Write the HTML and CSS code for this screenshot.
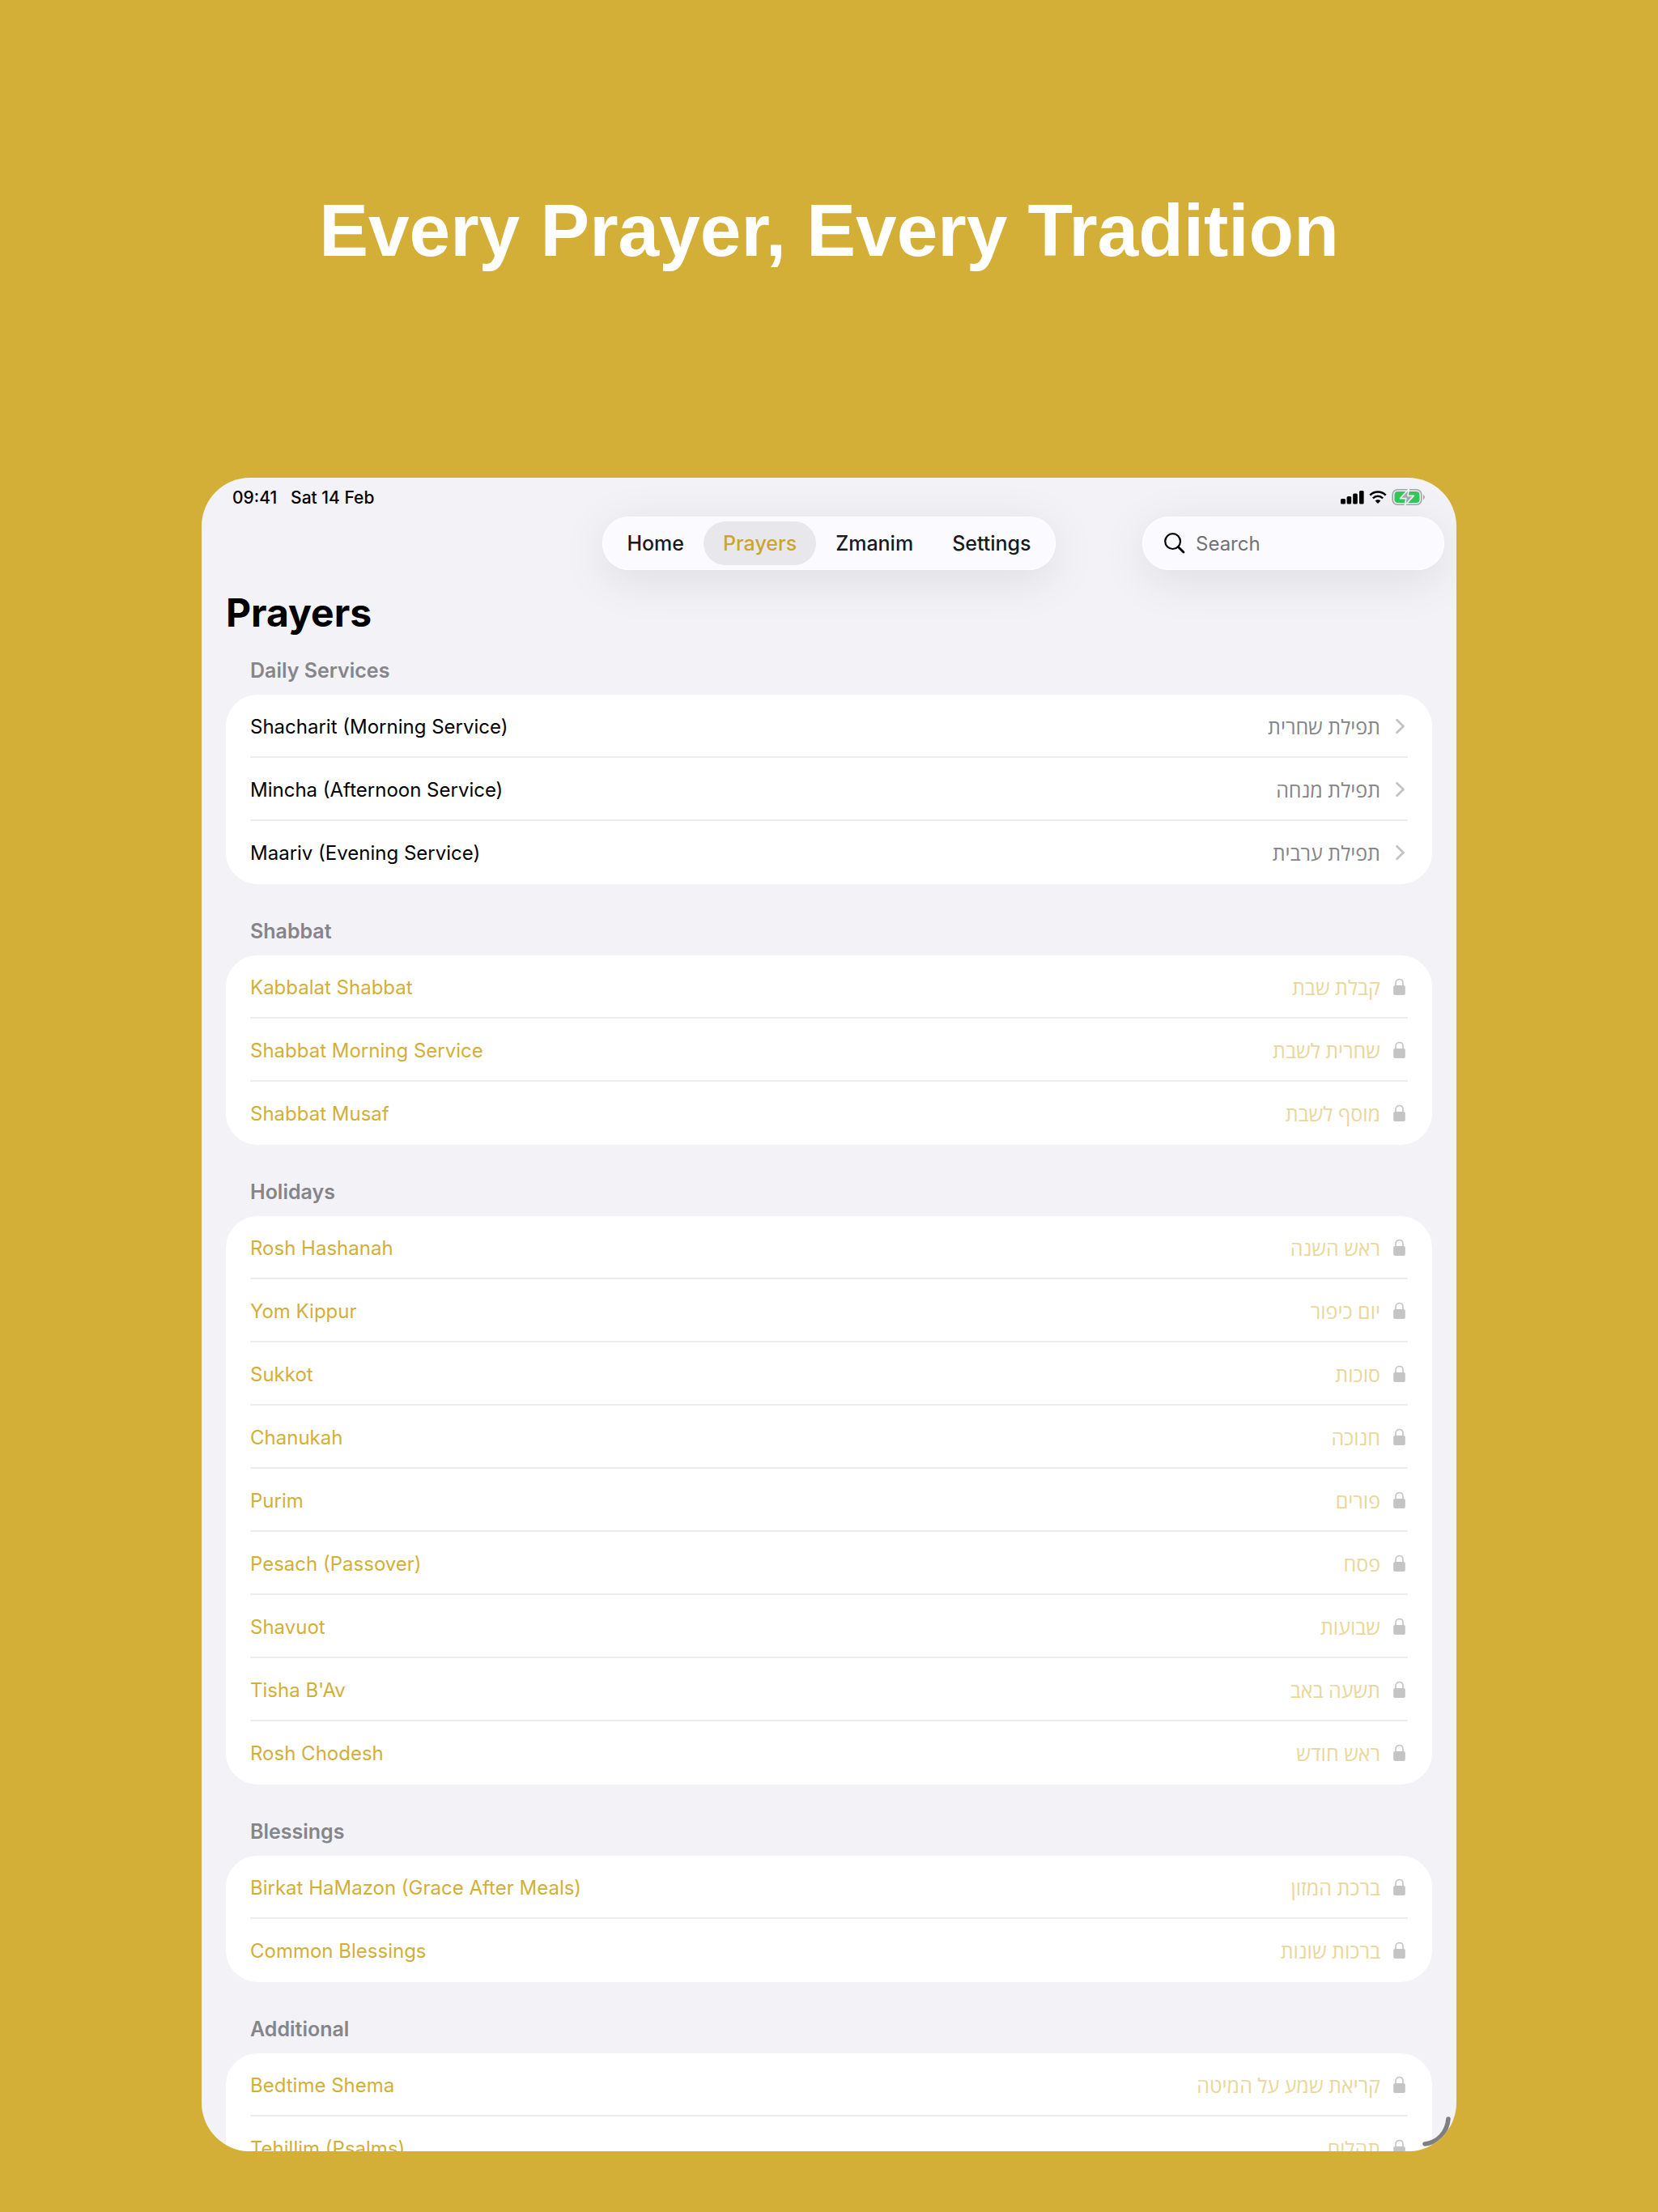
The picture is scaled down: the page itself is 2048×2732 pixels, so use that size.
FILE: index.html
```html
<!DOCTYPE html>
<html lang="en">
<head>
    <meta charset="UTF-8">
    <meta name="viewport" content="width=device-width, initial-scale=1.0">
    <title>Prayers</title>
    <link rel="stylesheet" href="styles.css">
</head>
<body>
    <!-- shared icons -->
    <svg class="sprite" aria-hidden="true">
        <symbol id="chevron" viewBox="0 0 20 22">
            <path d="M6.5 3.3 L14.5 11 L6.5 18.7" fill="none" stroke="#c4c4c6" stroke-width="2.8" stroke-linecap="round" stroke-linejoin="round"/>
        </symbol>
        <symbol id="lock" viewBox="0 0 20 22">
            <path d="M5 10 V6.2 C5 3.2 7 1.5 9.5 1.5 S14 3.2 14 6.2 V10" fill="none" stroke="#c4c4c6" stroke-width="1.6"/>
            <rect x="2.2" y="9" width="14.6" height="12" rx="2" fill="#c4c4c6"/>
        </symbol>
    </svg>

    <h1 class="headline">Every Prayer, Every Tradition</h1>

    <div class="tablet">
        <div class="status">
            <span>09:41</span>
            <span>Sat 14 Feb</span>
            <div class="status-icons">
                <svg width="29" height="18" viewBox="0 0 29 18">
                    <rect x="0" y="11" width="6" height="6.5" rx="1.5"/>
                    <rect x="7.6" y="8" width="5.6" height="9.5" rx="1.5"/>
                    <rect x="15.2" y="4.5" width="5.6" height="13" rx="1.5"/>
                    <rect x="23" y="1" width="5.6" height="16.5" rx="1.5"/>
                </svg>
                <svg width="22" height="18" viewBox="0 0 22 18">
                    <path d="M1.3 6.6 C6.8 1.2 15.2 1.2 20.7 6.6" fill="none" stroke="#000" stroke-width="2.6"/>
                    <path d="M4.9 10.4 C8.4 7 13.6 7 17.1 10.4" fill="none" stroke="#000" stroke-width="2.5"/>
                    <path d="M11 17 L7.6 13.6 C9.5 11.8 12.5 11.8 14.4 13.6 Z"/>
                </svg>
                <svg width="42" height="22" viewBox="0 0 42 22">
                    <rect x="1.2" y="1.8" width="35.6" height="18.4" rx="6" fill="none" stroke="#a5a5a9" stroke-width="1.6"/>
                    <rect x="3.5" y="4" width="31" height="14" rx="4" fill="#34c759"/>
                    <path d="M39 8 C41.4 9 41.4 13 39 14 Z" fill="#a5a5a9"/>
                    <path d="M21.3 1 L10.5 12.6 H17.8 L16.3 21 L27.3 9.4 H20 Z" fill="#a9a9ad" stroke="#f2f2f7" stroke-width="1.6" stroke-linejoin="round"/>
                </svg>
            </div>
        </div>

        <div class="toolbar">
            <nav class="tabs">
                <a href="#home" class="tab">Home</a>
                <a href="#prayers" class="tab active">Prayers</a>
                <a href="#zmanim" class="tab">Zmanim</a>
                <a href="#settings" class="tab">Settings</a>
            </nav>
            <label class="search">
                <svg width="26" height="26" viewBox="0 0 26 26" aria-hidden="true">
                    <circle cx="10.6" cy="10.6" r="9.4" fill="none" stroke="#000" stroke-width="2.2"/>
                    <path d="M17.4 17.4 L24 24" stroke="#000" stroke-width="2.8" stroke-linecap="round"/>
                </svg>
                <input type="search" placeholder="Search" aria-label="Search">
            </label>
        </div>

        <main class="content">
            <h2 class="page-title">Prayers</h2>

            <section class="group">
                <h3>Daily Services</h3>
                <ul class="card">
                    <li><a href="#" class="row"><span>Shacharit (Morning Service)</span><span class="he" lang="he" dir="rtl">תפילת שחרית</span><svg class="icon"><use href="#chevron"/></svg></a></li>
                    <li><a href="#" class="row"><span>Mincha (Afternoon Service)</span><span class="he" lang="he" dir="rtl">תפילת מנחה</span><svg class="icon"><use href="#chevron"/></svg></a></li>
                    <li><a href="#" class="row"><span>Maariv (Evening Service)</span><span class="he" lang="he" dir="rtl">תפילת ערבית</span><svg class="icon"><use href="#chevron"/></svg></a></li>
                </ul>
            </section>

            <section class="group">
                <h3>Shabbat</h3>
                <ul class="card locked">
                    <li><a href="#" class="row"><span>Kabbalat Shabbat</span><span class="he" lang="he" dir="rtl">קבלת שבת</span><svg class="icon"><use href="#lock"/></svg></a></li>
                    <li><a href="#" class="row"><span>Shabbat Morning Service</span><span class="he" lang="he" dir="rtl">שחרית לשבת</span><svg class="icon"><use href="#lock"/></svg></a></li>
                    <li><a href="#" class="row"><span>Shabbat Musaf</span><span class="he" lang="he" dir="rtl">מוסף לשבת</span><svg class="icon"><use href="#lock"/></svg></a></li>
                </ul>
            </section>

            <section class="group">
                <h3>Holidays</h3>
                <ul class="card locked">
                    <li><a href="#" class="row"><span>Rosh Hashanah</span><span class="he" lang="he" dir="rtl">ראש השנה</span><svg class="icon"><use href="#lock"/></svg></a></li>
                    <li><a href="#" class="row"><span>Yom Kippur</span><span class="he" lang="he" dir="rtl">יום כיפור</span><svg class="icon"><use href="#lock"/></svg></a></li>
                    <li><a href="#" class="row"><span>Sukkot</span><span class="he" lang="he" dir="rtl">סוכות</span><svg class="icon"><use href="#lock"/></svg></a></li>
                    <li><a href="#" class="row"><span>Chanukah</span><span class="he" lang="he" dir="rtl">חנוכה</span><svg class="icon"><use href="#lock"/></svg></a></li>
                    <li><a href="#" class="row"><span>Purim</span><span class="he" lang="he" dir="rtl">פורים</span><svg class="icon"><use href="#lock"/></svg></a></li>
                    <li><a href="#" class="row"><span>Pesach (Passover)</span><span class="he" lang="he" dir="rtl">פסח</span><svg class="icon"><use href="#lock"/></svg></a></li>
                    <li><a href="#" class="row"><span>Shavuot</span><span class="he" lang="he" dir="rtl">שבועות</span><svg class="icon"><use href="#lock"/></svg></a></li>
                    <li><a href="#" class="row"><span>Tisha B'Av</span><span class="he" lang="he" dir="rtl">תשעה באב</span><svg class="icon"><use href="#lock"/></svg></a></li>
                    <li><a href="#" class="row"><span>Rosh Chodesh</span><span class="he" lang="he" dir="rtl">ראש חודש</span><svg class="icon"><use href="#lock"/></svg></a></li>
                </ul>
            </section>

            <section class="group">
                <h3>Blessings</h3>
                <ul class="card locked">
                    <li><a href="#" class="row"><span>Birkat HaMazon (Grace After Meals)</span><span class="he" lang="he" dir="rtl">ברכת המזון</span><svg class="icon"><use href="#lock"/></svg></a></li>
                    <li><a href="#" class="row"><span>Common Blessings</span><span class="he" lang="he" dir="rtl">ברכות שונות</span><svg class="icon"><use href="#lock"/></svg></a></li>
                </ul>
            </section>

            <section class="group">
                <h3>Additional</h3>
                <ul class="card locked">
                    <li><a href="#" class="row"><span>Bedtime Shema</span><span class="he" lang="he" dir="rtl">קריאת שמע על המיטה</span><svg class="icon"><use href="#lock"/></svg></a></li>
                    <li><a href="#" class="row"><span>Tehillim (Psalms)</span><span class="he" lang="he" dir="rtl">תהלים</span><svg class="icon"><use href="#lock"/></svg></a></li>
                </ul>
            </section>
        </main>

        <svg class="resize" width="36" height="38" viewBox="0 0 36 38" aria-hidden="true">
            <path d="M33 3 C31.5 20 20 32 4 34" fill="none" stroke="#7f7f7f" stroke-width="5.6" stroke-linecap="round"/>
        </svg>
    </div>
</body>
</html>
```

FILE: styles.css
```css
*{
    box-sizing: border-box;
}
body{
    margin: 0;
    height: 100vh;
    display: flex;
    flex-direction: column;
    padding: 229px 249px 75px;
    background-color: #d3af37;
    font-family: Inter, "Open Sans", sans-serif;
    font-size: 24px;
    color: black;
    overflow: hidden;
}
h1,h2,h3,ul{
    margin: 0;
    padding: 0;
}
ul{
    list-style: none;
}
a{
    color: inherit;
    text-decoration: none;
}
.sprite{
    display: none;
}

.headline{
    margin-bottom: 249px;
    font-family: "Liberation Sans", Arial, sans-serif;
    font-size: 91px;
    line-height: 112px;
    text-align: center;
    white-space: nowrap;
    color: white;
}

.tablet{
    position: relative;
    flex: 1;
    min-height: 0;
    overflow: hidden;
    border-radius: 60px;
    background-color: #f2f2f7;
}

/* status bar */
.status{
    display: flex;
    align-items: center;
    gap: 17px;
    height: 48px;
    padding: 0 38px;
    font-size: 21px;
    font-weight: 500;
}
.status-icons{
    display: flex;
    align-items: center;
    gap: 6px;
    margin-left: auto;
}

/* tabs and search */
.toolbar{
    display: grid;
    grid-template-columns: 1fr auto 1fr;
    align-items: center;
    padding: 0 15px;
}
.tabs{
    grid-column: 2;
    display: flex;
    height: 66px;
    padding: 6px;
    border-radius: 33px;
    background-color: #fbfbff;
    box-shadow: inset 0 0 0 1px white, 0 12px 60px rgb(0, 0, 0, .09);
}
.tab{
    padding: 0 24px;
    border-radius: 27px;
    font-size: 25px;
    line-height: 54px;
    font-weight: 500;
    color: #1a1a1a;
}
.active{
    background-color: #e8e8ec;
    color: #cba52f;
}
.search{
    justify-self: end;
    display: flex;
    align-items: center;
    gap: 13px;
    width: 373px;
    height: 66px;
    padding: 0 27px;
    border-radius: 33px;
    background-color: #fbfbff;
    box-shadow: inset 0 0 0 1px white, 0 12px 60px rgb(0, 0, 0, .09);
}
.search svg{
    flex: none;
}
.search input{
    flex: 1;
    min-width: 0;
    padding: 0;
    border: none;
    outline: none;
    background: none;
    font: inherit;
}
.search input::placeholder{
    color: #727275;
}

/* list */
.content{
    padding: 23px 30px 0;
}
.page-title{
    font-size: 48px;
    line-height: 60px;
}
.group{
    margin-bottom: 17px;
}
.group h3{
    padding: 25px 30px 14px;
    font-size: 25px;
    line-height: 32px;
    font-weight: 600;
    color: #85858a;
}
.card{
    padding: 0 30px;
    border-radius: 39px;
    background-color: white;
}
.row{
    display: flex;
    align-items: center;
    height: 78px;
    padding-top: 2px;
    border-bottom: 2px solid #ebebec;
}
.card li:last-child .row{
    border-bottom-color: transparent;
}
.he{
    margin-left: auto;
    font-family: "Open Sans", sans-serif;
    font-size: 25px;
    line-height: 32px;
    color: #858589;
}
.icon{
    width: 20px;
    height: 22px;
    margin-left: 14px;
}
.locked{
    color: #d3af37;
}
.locked .he{
    color: #e9d79b;
}

.resize{
    position: absolute;
    right: 7px;
    bottom: 5px;
}
```
